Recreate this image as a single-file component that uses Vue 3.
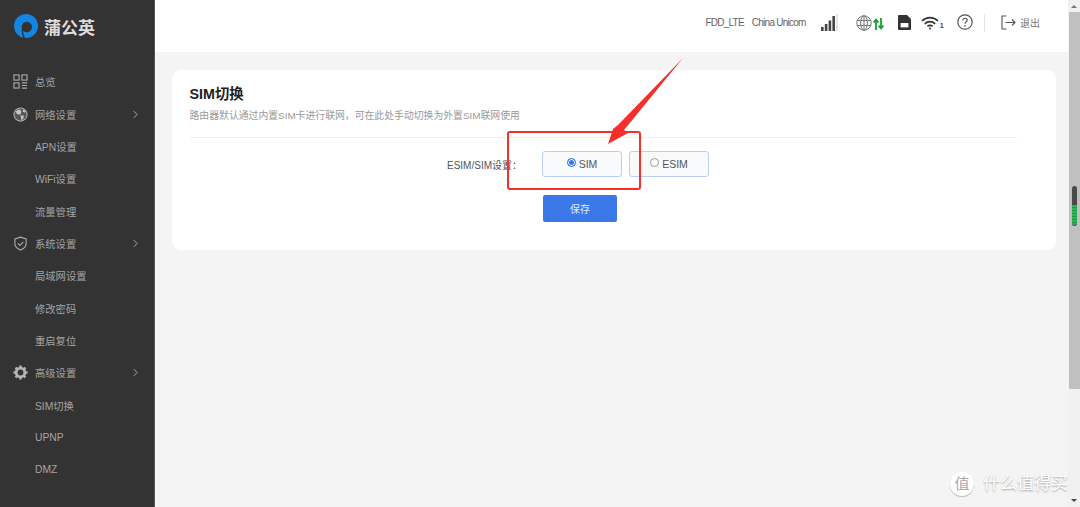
<template>
  <div class="page">
    <aside class="sidebar">
      <div class="logo">
        <svg class="logo-icon" viewBox="0 0 24 24" width="24" height="24">
          <circle cx="12" cy="12" r="12" fill="#1485e0" />
          <circle cx="12.8" cy="13" r="5.2" fill="#333" />
          <path d="M8.6 15 C8.2 18 8.8 21.5 10.5 24.5" fill="none" stroke="#333" stroke-width="1.5" />
        </svg>
        <span>蒲公英</span>
      </div>
      <nav class="menu">
        <div v-for="item in menu" :key="item.label" class="menu-row" :class="{ child: !item.icon }">
          <svg v-if="item.icon === 'grid'" class="menu-icon" viewBox="0 0 16 16" fill="none" stroke="#aaa" stroke-width="1.2">
            <rect x="1" y="1" width="5.5" height="5.5" />
            <rect x="1" y="9.5" width="5.5" height="5.5" />
            <rect x="9.5" y="1" width="5.5" height="5.5" />
            <path d="M9.5 9.5H15M9.5 12.2H15M9.5 15H15" />
          </svg>
          <svg v-else-if="item.icon === 'globe'" class="menu-icon" viewBox="0 0 16 16">
            <circle cx="8" cy="8" r="7" fill="#555" stroke="#aaa" stroke-width="1.2" />
            <path d="M3 4.5 L7 2.5 L9 5 L8 8 L5 8 L3.5 6.5 Z M8 9 L11.5 9 L11 12.5 L9 14 Z M10.5 2.5 L13.5 4.5 L12.5 6 L10.5 5 Z" fill="#c8c8c8" />
          </svg>
          <svg v-else-if="item.icon === 'shield'" class="menu-icon" viewBox="0 0 16 16" fill="none" stroke="#aaa" stroke-width="1.2">
            <path d="M8 1.2 L14 3.2 V8 C14 11.5 11 13.8 8 15 C5 13.8 2 11.5 2 8 V3.2 Z" />
            <path d="M5.2 7.8 L7.4 10 L11 6.2" />
          </svg>
          <svg v-else-if="item.icon === 'gear'" class="menu-icon" viewBox="0 0 16 16">
            <circle cx="8" cy="8" r="4.6" fill="none" stroke="#b4b4b4" stroke-width="3" />
            <path d="M8 8 V0.5 M8 8 V15.5 M8 8 H0.5 M8 8 H15.5 M8 8 L2.7 2.7 M8 8 L13.3 13.3 M8 8 L13.3 2.7 M8 8 L2.7 13.3" stroke="#b4b4b4" stroke-width="2.6" stroke-dasharray="0 5 3 0" />
            <circle cx="8" cy="8" r="2.3" fill="#333" />
          </svg>
          <span class="menu-label">{{ item.label }}</span>
          <svg v-if="item.arrow" class="menu-arrow" viewBox="0 0 6 10" fill="none" stroke="#aaa" stroke-width="1.2">
            <path d="M1 1 L5 5 L1 9" />
          </svg>
        </div>
      </nav>
    </aside>

    <div class="main">
      <header class="topbar">
        <span class="net-text">FDD_LTE</span>
        <span class="net-text carrier">China Unicom</span>
        <svg class="signal" viewBox="0 0 17 18" width="17" height="18">
          <rect x="0" y="13" width="2.6" height="4" fill="#444" />
          <rect x="3.8" y="10" width="2.6" height="7" fill="#444" />
          <rect x="7.6" y="6.5" width="2.6" height="10.5" fill="#444" />
          <rect x="11.4" y="2" width="2.6" height="15" fill="#444" />
          <rect x="15" y="0" width="2" height="17" fill="#e4e4e4" />
        </svg>
        <svg class="globe" viewBox="0 0 16 16" width="16" height="16" fill="none" stroke="#777" stroke-width="1">
          <circle cx="8" cy="8" r="7.2" />
          <ellipse cx="8" cy="8" rx="3.4" ry="7.2" />
          <path d="M8 .8V15.2M1 5.5H15M1 10.5H15" />
        </svg>
        <svg class="updown" viewBox="0 0 11 12" width="11" height="12" fill="none" stroke="#12a32f" stroke-width="1.8">
          <path d="M3 12V2M.6 4.4L3 1.6L5.4 4.4" />
          <path d="M8 0V10M5.6 7.6L8 10.4L10.4 7.6" />
        </svg>
        <svg class="sim" viewBox="0 0 13 15" width="13" height="15">
          <path d="M0 1 Q0 0 1 0 H9 L13 4 V14 Q13 15 12 15 H1 Q0 15 0 14 Z" fill="#333" />
          <rect x="2.6" y="8" width="7.8" height="4.4" fill="#fff" />
        </svg>
        <div class="wifi">
          <svg viewBox="0 0 18 14" width="18" height="14" fill="none" stroke="#333" stroke-width="1.7">
            <path d="M1 5 C5.5 .6 12.5 .6 17 5" />
            <path d="M3.8 7.8 C6.8 5 11.2 5 14.2 7.8" />
            <path d="M6.4 10.4 C8 9 10 9 11.6 10.4" />
            <circle cx="9" cy="12.6" r="1" fill="#333" stroke="none" />
          </svg>
          <span>1</span>
        </div>
        <svg class="help" viewBox="0 0 16 16" width="16" height="16" fill="none" stroke="#555" stroke-width="1.2">
          <circle cx="8" cy="8" r="7.2" />
          <path d="M5.8 6.2 C5.8 3.6 10.3 3.6 10.3 6.2 C10.3 7.8 8 7.8 8 9.8" />
          <circle cx="8" cy="11.9" r=".8" fill="#555" stroke="none" />
        </svg>
        <span class="divider"></span>
        <svg class="exit" viewBox="0 0 15 15" width="15" height="15" fill="none" stroke="#555" stroke-width="1.1">
          <path d="M5.5 1H1V14H5.5" />
          <path d="M4.5 7.5H14M11 4.5L14 7.5L11 10.5" />
        </svg>
        <span class="exit-text">退出</span>
      </header>

      <main class="content">
        <section class="card">
          <h2>SIM切换</h2>
          <p class="desc">路由器默认通过内置SIM卡进行联网，可在此处手动切换为外置SIM联网使用</p>
          <div class="form">
            <div class="form-row">
              <span class="form-label">ESIM/SIM设置：</span>
              <div class="radio-box">
                <span class="radio on"></span>
                <span>SIM</span>
              </div>
              <div class="radio-box">
                <span class="radio"></span>
                <span>ESIM</span>
              </div>
            </div>
            <button class="save">保存</button>
          </div>
        </section>
      </main>
    </div>

    <div class="scrollbar">
      <span class="up"></span>
      <div class="track">
        <div class="thumb"><div class="thumb-green"></div></div>
      </div>
      <span class="down"></span>
    </div>

    <!-- annotation drawn on top of the screenshot -->
    <div class="mark-box"></div>
    <svg class="mark-arrow" viewBox="0 0 90 100" width="90" height="100">
      <path d="M83 8 L24 80 L28 83 L8 94 L13 79 L18 75 Z" fill="#f5302a" />
    </svg>

    <div class="watermark">
      <span class="wm-badge">值</span>
      <span class="wm-text">什么值得买</span>
    </div>
  </div>
</template>

<script setup>
const menu = [
  { label: '总览', icon: 'grid' },
  { label: '网络设置', icon: 'globe', arrow: true },
  { label: 'APN设置' },
  { label: 'WiFi设置' },
  { label: '流量管理' },
  { label: '系统设置', icon: 'shield', arrow: true },
  { label: '局域网设置' },
  { label: '修改密码' },
  { label: '重启复位' },
  { label: '高级设置', icon: 'gear', arrow: true },
  { label: 'SIM切换' },
  { label: 'UPNP' },
  { label: 'DMZ' }
]
</script>

<style>
html,
body {
  margin: 0;
  overflow: hidden;
}
</style>

<style scoped>
.page {
  position: relative;
  display: flex;
  width: 1080px;
  height: 507px;
  overflow: hidden;
  background: #f4f4f4;
  font-family: "Liberation Sans", "Noto Sans CJK SC", sans-serif;
  color: #444;
}

.sidebar {
  width: 154px;
  flex-shrink: 0;
  background: #333;
  border-right: 1px solid #555;
}

.logo {
  display: flex;
  align-items: center;
  gap: 6px;
  height: 52px;
  padding-left: 14px;
  box-sizing: border-box;
  font-size: 17px;
  font-weight: 700;
  color: #ddd;
}

.menu {
  padding-top: 13.5px;
}

.menu-row {
  display: flex;
  align-items: center;
  height: 32.37px;
  padding-left: 13px;
  font-size: 10.3px;
  color: #a4a4a4;
}

.menu-row.child {
  padding-left: 35px;
}

.menu-icon {
  width: 15px;
  height: 15px;
  margin-right: 7px;
  flex-shrink: 0;
}

.menu-arrow {
  width: 5px;
  height: 9px;
  margin-left: auto;
  margin-right: 16px;
}

.main {
  flex: 1;
  min-width: 0;
  display: flex;
  flex-direction: column;
}

.topbar {
  display: flex;
  align-items: center;
  height: 52px;
  padding: 0 28px 7px 0;
  justify-content: flex-end;
  background: #fff;
  flex-shrink: 0;
  box-sizing: border-box;
}

.net-text {
  font-size: 10px;
  letter-spacing: -0.76px;
  color: #666;
}

.carrier {
  margin-left: 8px;
}

.signal {
  margin-left: 15px;
}

.globe {
  margin-left: 18px;
}

.updown {
  margin-left: 1px;
  margin-top: 3px;
}

.sim {
  margin-left: 14px;
}

.wifi {
  display: flex;
  align-items: flex-end;
  margin-left: 10px;
  font-size: 8px;
  font-weight: 700;
  color: #555;
}

.wifi span {
  margin-left: 1px;
  line-height: 8px;
}

.help {
  margin-left: 13px;
  margin-top: -1px;
}

.divider {
  width: 1px;
  height: 18px;
  margin-left: 11px;
  background: #e2e2e2;
}

.exit {
  margin-left: 16px;
}

.exit-text {
  margin-left: 4px;
  font-size: 10px;
  color: #777;
}

.content {
  flex: 1;
  padding: 18px 12px 0 17px;
}

.card {
  height: 180px;
  padding: 15px 39px 0 17.5px;
  box-sizing: border-box;
  background: #fff;
  border-radius: 9px;
}

.card h2 {
  margin: 0;
  font-size: 14.3px;
  line-height: 18px;
  font-weight: 700;
  color: #222;
}

.desc {
  margin: 6px 0 0;
  padding-bottom: 14px;
  font-size: 9.85px;
  line-height: 14px;
  color: #999;
  border-bottom: 1px solid #f0f0f0;
}

.form {
  display: flex;
  flex-direction: column;
  padding-top: 13px;
}

.form-row {
  display: flex;
  align-items: center;
  gap: 7px;
  padding-left: 257.5px;
}

.form-label {
  width: 88px;
  font-size: 10px;
  color: #555;
}

.radio-box {
  display: flex;
  align-items: center;
  justify-content: center;
  gap: 3px;
  width: 80px;
  height: 26px;
  box-sizing: border-box;
  border: 1px solid #b9d0f3;
  border-radius: 3px;
  background: #f9fafc;
  font-size: 10.5px;
  color: #555;
}

.radio {
  width: 9px;
  height: 9px;
  box-sizing: border-box;
  margin-top: -3px;
  border: 1px solid #999;
  border-radius: 50%;
  background: #fff;
}

.radio.on {
  border-color: #3b78e7;
  background: #3b78e7;
  box-shadow: inset 0 0 0 1px #fff;
}

.save {
  width: 74px;
  height: 27px;
  margin: 18px 0 0 353.5px;
  border: none;
  border-radius: 2px;
  background: #3b78e7;
  color: #dfe9fb;
  font-family: inherit;
  font-size: 10px;
}

.scrollbar {
  width: 12px;
  flex-shrink: 0;
  display: flex;
  flex-direction: column;
  background: #f1f1f1;
}

.up,
.down {
  width: 0;
  height: 0;
  margin: 0 auto;
  border-left: 3px solid transparent;
  border-right: 3px solid transparent;
}

.up {
  margin-top: 5px;
  border-bottom: 3px solid #777;
}

.down {
  margin-top: 110px;
  border-top: 3px solid #444;
}

.track {
  height: 377px;
  margin-top: 4px;
  margin-left: 1px;
  background: #c0c0c0;
  padding-top: 174px;
  box-sizing: border-box;
}

.thumb {
  width: 5px;
  height: 40px;
  margin-left: 3px;
  border-radius: 3px;
  background: #4a4a4a;
}

.thumb-green {
  height: 20px;
  transform: translateY(19px);
  background: repeating-linear-gradient(#2fb457 0 2px, #1f9a45 2px 3px);
  border-radius: 0 0 3px 3px;
}

.mark-box {
  position: absolute;
  left: 507px;
  top: 131px;
  width: 134px;
  height: 59px;
  box-sizing: border-box;
  border: 2px solid #f5302a;
  border-radius: 3px;
}

.mark-arrow {
  position: absolute;
  left: 600px;
  top: 50px;
}

.watermark {
  position: absolute;
  left: 950px;
  top: 472px;
  display: flex;
  align-items: center;
  gap: 9px;
  color: #fff;
  text-shadow: 0 1px 2px rgba(0, 0, 0, 0.35);
}

.wm-badge {
  width: 24px;
  height: 24px;
  border-radius: 50%;
  background: #fff;
  box-shadow: 0 1px 1px rgba(0, 0, 0, 0.25);
  color: #aaa;
  text-shadow: none;
  font-size: 15px;
  line-height: 24px;
  text-align: center;
}

.wm-text {
  font-size: 17px;
  line-height: 24px;
}
</style>
